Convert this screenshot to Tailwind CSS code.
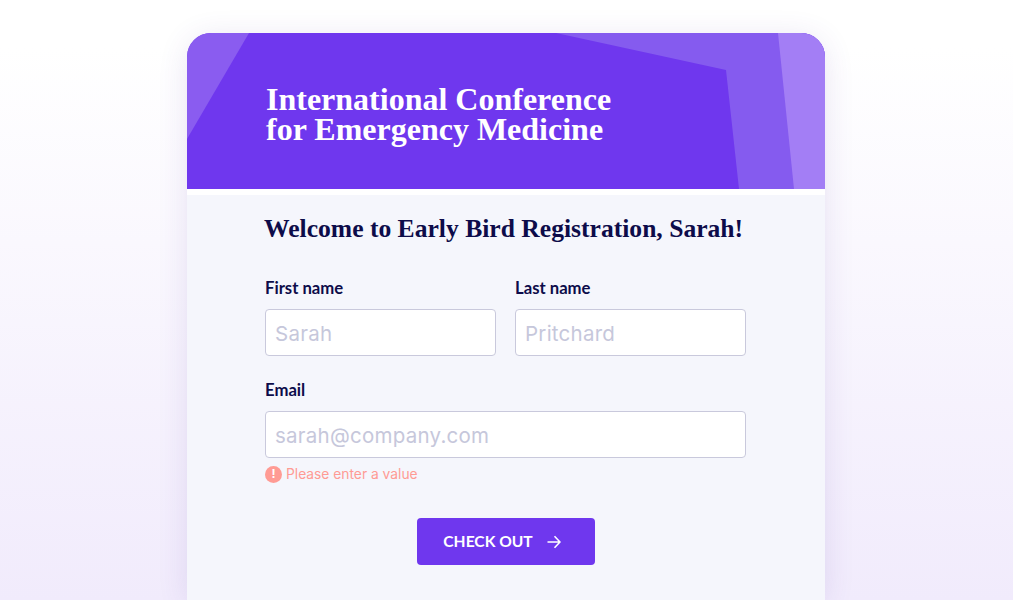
<!DOCTYPE html>
<html lang="en">

<head>
  <meta charset="UTF-8">
  <title>Early Bird Registration</title>
  <script src="https://cdn.jsdelivr.net/npm/@tailwindcss/browser@4"></script>
</head>

<body class="h-[600px] overflow-hidden bg-gradient-to-b from-white from-[8%] to-[#f1ebfc]">
  <div class="ml-[187px] mt-[33px] w-[638px] h-[567px] rounded-t-[24px] bg-[#f5f6fc] shadow-[0_4px_30px_rgba(80,50,160,0.12)] overflow-hidden">
    <!-- Header -->
    <div class="relative h-[156px] bg-[#6f37ee]">
      <svg class="absolute inset-0" width="638" height="156" viewBox="0 0 638 156">
        <polygon points="0,0 62,0 0,106" fill="#8a5cf0" />
        <polygon points="369,0 638,0 638,156 552,156 539,37" fill="#855bef" />
        <polygon points="591,0 638,0 638,156 607,156" fill="#a37ef5" />
      </svg>
      <h1 class="relative pl-[79px] pt-[51px] font-['Liberation_Serif',serif] font-bold text-[32px] leading-[30px] text-white">
        International Conference<br>for Emergency Medicine
      </h1>
    </div>
    <div class="h-[6px] bg-white"></div>

    <!-- Form -->
    <div class="px-[78px]">
      <h2 class="mt-[19px] -ml-[1px] font-['Liberation_Serif',serif] font-bold text-[25.6px] leading-[30px] text-[#0d0c4a] whitespace-nowrap">
        Welcome to Early Bird Registration, Sarah!
      </h2>

      <div class="mt-[34px] grid grid-cols-2 gap-x-[19px] w-[481px]">
        <div>
          <label class="block font-['Lato',sans-serif] font-bold text-[16.7px] leading-[20px] text-[#0d0c4a]">First name</label>
          <input type="text" placeholder="Sarah" class="mt-[11px] block w-full h-[47px] px-[9px] pt-[2px] rounded-[4px] border border-[#c9c9dc] bg-white font-['Inter',sans-serif] text-[20.5px] tracking-[0.25px] placeholder:text-[#c6c7db]">
        </div>
        <div>
          <label class="block font-['Lato',sans-serif] font-bold text-[16.7px] leading-[20px] text-[#0d0c4a]">Last name</label>
          <input type="text" placeholder="Pritchard" class="mt-[11px] block w-full h-[47px] px-[9px] pt-[2px] rounded-[4px] border border-[#c9c9dc] bg-white font-['Inter',sans-serif] text-[20.5px] tracking-[0.25px] placeholder:text-[#c6c7db]">
        </div>
      </div>

      <div class="mt-[24px] w-[481px]">
        <label class="block font-['Lato',sans-serif] font-bold text-[16.7px] leading-[20px] text-[#0d0c4a]">Email</label>
        <input type="email" placeholder="sarah@company.com" class="mt-[11px] block w-full h-[47px] px-[9px] pt-[2px] rounded-[4px] border border-[#c9c9dc] bg-white font-['Inter',sans-serif] text-[20.5px] tracking-[0.25px] placeholder:text-[#c6c7db]">
        <div class="mt-[7px] flex items-center gap-[4px] font-['Inter',sans-serif] text-[13.8px] leading-[18px] text-[#ff9b94]">
          <span class="flex items-center justify-center w-[17px] h-[17px] rounded-full bg-[#ff9b94] text-white text-[12px] font-bold">!</span>
          <span>Please enter a value</span>
        </div>
      </div>

      <!-- Check out -->
      <div class="mt-[35px] w-[481px] flex justify-center">
        <button class="flex items-center justify-center gap-[14px] w-[178px] h-[47px] rounded-[4px] bg-[#6f37ee] text-white font-['Lato',sans-serif] font-bold text-[15.6px] pr-[7px]">
          CHECK OUT
          <svg width="14" height="14" viewBox="0 0 14 14" fill="none" stroke="currentColor" stroke-width="1.6">
            <path d="M0.5 7H13M7.5 1.2L13 7L7.5 12.8" />
          </svg>
        </button>
      </div>
    </div>
  </div>
</body>

</html>
